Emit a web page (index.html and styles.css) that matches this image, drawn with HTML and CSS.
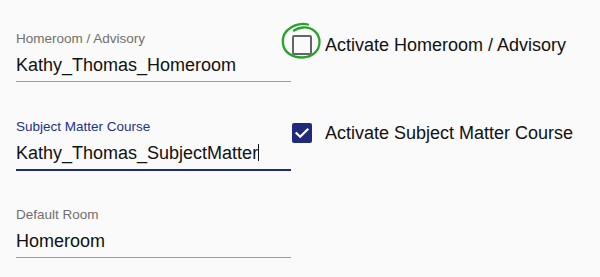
FILE: index.html
```html
<!DOCTYPE html>
<html>
<head>
<meta charset="utf-8">
<link rel="stylesheet" href="styles.css">
</head>
<body>
<div class="form">
  <div class="row">
    <div class="field">
      <div class="label">Homeroom / Advisory</div>
      <div class="value">Kathy_Thomas_Homeroom</div>
    </div>
    <div class="check">
      <span class="box">
        <svg class="mark-circle" width="46" height="42" viewBox="0 0 46 42"><path d="M30 4.5 C24 3, 17 4.5, 13 7.5 C7 11, 4 17, 5 24 C6 32, 14 37.5, 24 37.5 C34 37.5, 41.5 31, 41.5 22 C41.5 13, 34 7, 25 7.5 C21 7.8, 18 9, 16 10.5" fill="none" stroke="#27a22b" stroke-width="2.3" stroke-linecap="round" stroke-linejoin="round"/></svg>
      </span>
      <span class="check-text">Activate Homeroom / Advisory</span>
    </div>
  </div>
  <div class="row">
    <div class="field focused">
      <div class="label">Subject Matter Course</div>
      <div class="value">Kathy_Thomas_SubjectMatter<span class="caret"></span></div>
    </div>
    <div class="check">
      <span class="box checked">
        <svg width="20" height="20" viewBox="0 0 20 20"><path d="M4.5 10.2 L8.2 13.8 L15.5 6.5" fill="none" stroke="#fff" stroke-width="2.2" stroke-linecap="square"/></svg>
      </span>
      <span class="check-text">Activate Subject Matter Course</span>
    </div>
  </div>
  <div class="row">
    <div class="field">
      <div class="label">Default Room</div>
      <div class="value">Homeroom</div>
    </div>
  </div>
</div>
</body>
</html>
```
FILE: styles.css
```css
html, body {
  margin: 0;
  padding: 0;
  background: #fafafa;
  overflow: hidden;
}
body {
  font-family: "Liberation Sans", Arial, sans-serif;
  color: #1a1a1a;
}
.form {
  padding: 31px 0 0 16px;
  display: grid;
  grid-template-rows: 88px 88px auto;
}
.row {
  display: flex;
  align-items: flex-start;
}
.field {
  width: 275px;
  border-bottom: 1px solid #9a9a9a;
  padding-bottom: 4px;
}
.field.focused {
  border-bottom: 2px solid #1c2a80;
}
.label {
  font-size: 13.5px;
  line-height: 16px;
  color: #707070;
}
.focused .label {
  color: #23318a;
}
.value {
  margin-top: 6px;
  font-size: 18px;
  line-height: 24px;
  color: #111;
  white-space: nowrap;
}
.caret {
  display: inline-block;
  width: 1px;
  height: 17px;
  background: #111;
  vertical-align: -2px;
  margin-left: 0;
}
.check {
  margin-left: 1px;
  margin-top: 2px;
  display: flex;
  align-items: center;
  gap: 13px;
  height: 24px;
}
.box {
  position: relative;
  box-sizing: border-box;
  width: 20px;
  height: 20px;
  border: 2px solid #646464;
  border-radius: 2px;
  flex: none;
}
.box.checked {
  border: none;
  background: #1f2a7c;
}
.box.checked svg {
  display: block;
}
.mark-circle {
  position: absolute;
  left: -16px;
  top: -17px;
}
.check-text {
  font-size: 18px;
  line-height: 24px;
  color: #111;
  white-space: nowrap;
}
```
